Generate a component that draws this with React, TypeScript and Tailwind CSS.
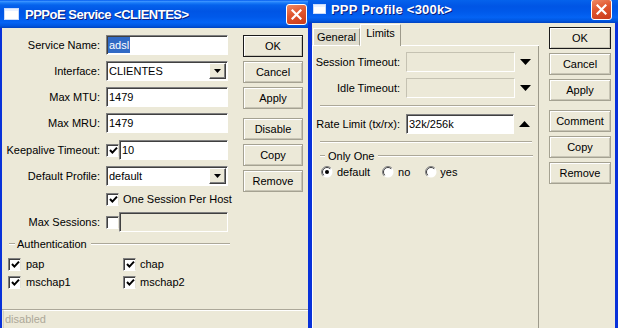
import React from 'react'

const TITLE_BG =
  'bg-[linear-gradient(180deg,#0058ee_0%,#3a93ff_5%,#1a7cf8_10%,#0562ec_18%,#0055e5_40%,#0059ea_60%,#0463f4_80%,#0056e0_92%,#0042c0_100%)]'

function WinIcon({ small }: { small?: boolean }) {
  return (
    <div
      className={
        small
          ? 'w-[13px] h-[10px] shrink-0 bg-white border border-[#c9dbfb] shadow-[inset_0_2px_0_#e8f0ff]'
          : 'w-[15px] h-[12px] shrink-0 bg-white border border-[#c9dbfb] shadow-[inset_0_2px_0_#e8f0ff]'
      }
    />
  )
}

function CloseBtn() {
  return (
    <div className="w-[21px] h-[21px] shrink-0 rounded-[3px] border border-white bg-[linear-gradient(160deg,#ef8a64_0%,#e0562e_45%,#c93a1b_100%)] flex items-center justify-center">
      <svg width="11" height="11" viewBox="0 0 11 11">
        <path d="M1.5 1.5 L9.5 9.5 M9.5 1.5 L1.5 9.5" stroke="#fff" strokeWidth="2.2" strokeLinecap="square" />
      </svg>
    </div>
  )
}

function CheckBox({ checked }: { checked?: boolean }) {
  return (
    <div className="w-[13px] h-[13px] shrink-0 bg-white border border-t-[#808080] border-l-[#808080] border-b-white border-r-[#e4e1d4] shadow-[inset_1px_1px_0_#404040] flex items-center justify-center">
      {checked && (
        <svg width="9" height="9" viewBox="0 0 9 9" className="ml-[1px] mt-[1px]">
          <path d="M1 4 L3.4 6.6 L8 1.6" stroke="#000" strokeWidth="2" fill="none" />
        </svg>
      )}
    </div>
  )
}

function Radio({ checked }: { checked?: boolean }) {
  return (
    <svg width="12" height="12" viewBox="0 0 12 12" className="shrink-0">
      <circle cx="6" cy="6" r="5.5" fill="#fff" />
      <path d="M2.1 9.9 A5.5 5.5 0 0 1 9.9 2.1" stroke="#808080" strokeWidth="1" fill="none" />
      <path d="M2.8 9.2 A4.5 4.5 0 0 1 9.2 2.8" stroke="#404040" strokeWidth="1" fill="none" />
      {checked && <circle cx="6" cy="6" r="2" fill="#000" />}
    </svg>
  )
}

function DropBtn() {
  return (
    <div className="w-[17px] h-[16px] mr-[1px] mt-[1px] shrink-0 bg-[#ece9d8] border border-t-white border-l-white border-b-[#404040] border-r-[#404040] shadow-[inset_-1px_-1px_0_#808080] flex items-center justify-center">
      <svg width="7" height="4" viewBox="0 0 7 4">
        <path d="M0 0 H7 L3.5 4 Z" fill="#000" />
      </svg>
    </div>
  )
}

function Input({
  children,
  className,
  disabled,
}: {
  children?: React.ReactNode
  className: string
  disabled?: boolean
}) {
  return (
    <div
      className={`h-[20px] flex items-center border border-t-[#808080] border-l-[#808080] border-b-white border-r-white shadow-[inset_1px_1px_0_#404040] ${
        disabled ? 'bg-[#ece9d8]' : 'bg-white'
      } ${className}`}
    >
      {children}
    </div>
  )
}

function Btn({ label, primary, extra }: { label: string; primary?: boolean; extra?: string }) {
  return (
    <div
      className={`h-[22px] flex items-center justify-center border bg-[#ece9d8] shadow-[inset_1px_1px_0_#fff,inset_-1px_-1px_0_#c8c5b5] ${
        primary ? 'border-[#1a1a1a]' : 'border-[#a5a292]'
      } ${extra ?? ''}`}
    >
      {label}
    </div>
  )
}

function Row({ label, children, extra }: { label: string; children: React.ReactNode; extra?: string }) {
  return (
    <div className={`flex items-center h-[20px] ${extra ?? ''}`}>
      <div className="w-[98px] text-right whitespace-nowrap">{label}</div>
      <div className="ml-[6px] flex items-center">{children}</div>
    </div>
  )
}

function Etched({ className }: { className: string }) {
  return <div className={`h-[2px] border-t border-t-[#aca899] border-b border-b-white ${className}`} />
}

function PPPoEWindow() {
  return (
    <div className="w-[308px] h-[328px] shrink-0 flex flex-col">
      <div className={`h-[28px] shrink-0 flex items-center pl-[4px] pr-[1px] ${TITLE_BG}`}>
        <WinIcon />
        <span className="ml-[6px] text-white font-bold text-[13px] tracking-[-0.5px] [text-shadow:1px_1px_0_#0a1e7c]">
          PPPoE Service &lt;CLIENTES&gt;
        </span>
        <div className="flex-1" />
        <CloseBtn />
      </div>
      <div className="flex-1 flex flex-col border-l-2 border-[#0831d9] bg-[#ece9d8]">
        <div className="flex-1 flex">
          <div className="w-[241px] flex flex-col pt-[7px]">
            <Row label="Service Name:">
              <Input className="w-[122px]">
                <span className="ml-[1px] h-[16px] px-[1px] flex items-center bg-[#316ac5] text-white">adsl</span>
              </Input>
            </Row>
            <Row label="Interface:" extra="mt-[6px]">
              <Input className="w-[122px] items-start">
                <span className="flex-1 pl-[2px] self-center">CLIENTES</span>
                <DropBtn />
              </Input>
            </Row>
            <Row label="Max MTU:" extra="mt-[6px]">
              <Input className="w-[122px]">
                <span className="pl-[2px]">1479</span>
              </Input>
            </Row>
            <Row label="Max MRU:" extra="mt-[6px]">
              <Input className="w-[122px]">
                <span className="pl-[2px]">1479</span>
              </Input>
            </Row>
            <Row label="Keepalive Timeout:" extra="mt-[7px]">
              <CheckBox checked />
              <Input className="w-[109px]">
                <span className="pl-[2px]">10</span>
              </Input>
            </Row>
            <Row label="Default Profile:" extra="mt-[6px]">
              <Input className="w-[122px] items-start">
                <span className="flex-1 pl-[2px] self-center">default</span>
                <DropBtn />
              </Input>
            </Row>
            <div className="flex items-center h-[20px] mt-[3px] pl-[104px]">
              <CheckBox checked />
              <span className="ml-[4px]">One Session Per Host</span>
            </div>
            <Row label="Max Sessions:" extra="mt-[3px]">
              <CheckBox />
              <Input className="w-[109px]" disabled />
            </Row>
            <div className="flex items-center h-[14px] mt-[5px] pl-[7px]">
              <Etched className="w-[6px]" />
              <span className="ml-[2px]">Authentication</span>
              <Etched className="ml-[4px] w-[139px]" />
            </div>
            <div className="flex items-center h-[16px] mt-[5px] pl-[6px]">
              <div className="w-[115px] flex items-center">
                <CheckBox checked />
                <span className="ml-[5px]">pap</span>
              </div>
              <CheckBox checked />
              <span className="ml-[4px]">chap</span>
            </div>
            <div className="flex items-center h-[16px] mt-[2px] pl-[6px]">
              <div className="w-[115px] flex items-center">
                <CheckBox checked />
                <span className="ml-[5px]">mschap1</span>
              </div>
              <CheckBox checked />
              <span className="ml-[4px]">mschap2</span>
            </div>
          </div>
          <div className="w-[60px] flex flex-col gap-[4px] pt-[7px]">
            <Btn label="OK" primary />
            <Btn label="Cancel" />
            <Btn label="Apply" />
            <Btn label="Disable" extra="mt-[5px]" />
            <Btn label="Copy" />
            <Btn label="Remove" />
          </div>
        </div>
        <div className="h-[19px] shrink-0 border-t border-t-[#aca899] flex">
          <div className="flex-1 border-l border-l-[#d4d0c0] ml-[1px] border-t border-t-white pl-[1px] flex items-center text-[#aca899]">
            disabled
          </div>
        </div>
      </div>
    </div>
  )
}

function PanelRow({
  label,
  children,
  extra,
}: {
  label: string
  children: React.ReactNode
  extra?: string
}) {
  return (
    <div className={`flex items-center h-[20px] ${extra ?? ''}`}>
      <div className="w-[80px] flex justify-end whitespace-nowrap">{label}</div>
      <div className="ml-[6px] flex items-center">{children}</div>
    </div>
  )
}

function Tri({ up }: { up?: boolean }) {
  return (
    <svg width="11" height="6" viewBox="0 0 11 6" className="ml-[5px]">
      <path d={up ? 'M0 6 H11 L5.5 0 Z' : 'M0 0 H11 L5.5 6 Z'} fill="#000" />
    </svg>
  )
}

function ProfileWindow() {
  return (
    <div className="w-[310px] h-[333px] -mt-[5px] shrink-0 flex flex-col">
      <div className={`h-[28px] shrink-0 flex items-center pl-[5px] pr-[6px] ${TITLE_BG}`}>
        <WinIcon small />
        <span className="ml-[5px] text-white font-bold text-[13px] tracking-[0.2px] [text-shadow:1px_1px_0_#0a1e7c]">
          PPP Profile &lt;300k&gt;
        </span>
        <div className="flex-1" />
        <CloseBtn />
      </div>
      <div className="flex-1 flex border-l-4 border-r-[3px] border-[#0831d9] bg-[#ece9d8]">
        <div className="w-[227px] flex flex-col">
          <div className="h-[23px] flex items-end">
            <div className="w-[1px] h-[1px] bg-white" />
            <div className="w-[47px] h-[18px] bg-[#dfdccd] border-t border-l border-t-white border-l-white border-r border-r-[#9d9a8b] border-b border-b-white flex items-center justify-center">
              General
            </div>
            <div className="w-[41px] h-[22px] border-t border-l border-t-white border-l-white border-r border-r-[#9d9a8b] flex items-start pt-[3px] justify-center">
              Limits
            </div>
            <div className="flex-1 h-[1px] bg-white" />
          </div>
          <div className="flex-1 border-l border-l-white border-r border-r-[#9d9a8b] flex flex-col pl-[7px]">
            <PanelRow label="Session Timeout:" extra="mt-[6px]">
              <Input className="w-[109px] border-t-[#c5c2b2] border-l-[#c5c2b2] shadow-none" disabled />
              <Tri />
            </PanelRow>
            <PanelRow label="Idle Timeout:" extra="mt-[6px]">
              <Input className="w-[109px] border-t-[#c5c2b2] border-l-[#c5c2b2] shadow-none" disabled />
              <Tri />
            </PanelRow>
            <Etched className="mt-[7px] w-[215px]" />
            <PanelRow label="Rate Limit (tx/rx):" extra="mt-[7px]">
              <Input className="w-[108px]">
                <span className="pl-[2px]">32k/256k</span>
              </Input>
              <Tri up />
            </PanelRow>
            <Etched className="mt-[7px] w-[212px]" />
            <div className="flex items-center h-[14px] mt-[6px]">
              <Etched className="w-[5px]" />
              <span className="ml-[3px]">Only One</span>
              <Etched className="ml-[4px] w-[155px]" />
            </div>
            <div className="flex items-center h-[14px] mt-[2px] pl-[1px]">
              <Radio checked />
              <span className="ml-[4px]">default</span>
              <span className="ml-[12px]">
                <Radio />
              </span>
              <span className="ml-[4px]">no</span>
              <span className="ml-[15px]">
                <Radio />
              </span>
              <span className="ml-[3px]">yes</span>
            </div>
          </div>
        </div>
        <div className="flex-1 flex flex-col gap-[4px] pt-[4px] pl-[10px] pr-[4px]">
          <Btn label="OK" primary />
          <Btn label="Cancel" />
          <Btn label="Apply" />
          <Btn label="Comment" extra="mt-[5px]" />
          <Btn label="Copy" />
          <Btn label="Remove" />
        </div>
      </div>
    </div>
  )
}

export default function App() {
  return (
    <div className="w-[618px] h-[328px] overflow-hidden flex bg-[#ece9d8] font-['Liberation_Sans',Arial,sans-serif] text-[11px] leading-none text-black">
      <PPPoEWindow />
      <ProfileWindow />
    </div>
  )
}
